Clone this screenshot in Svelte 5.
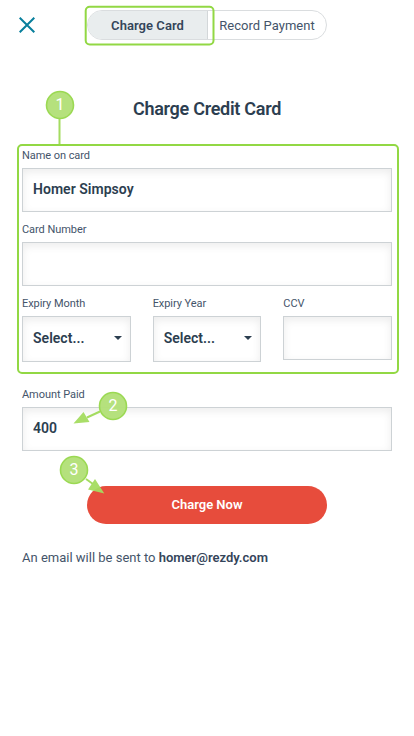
<script lang="ts">

  let name = $state("Homer Simpsoy");
  let cardNumber = $state("");
  let ccv = $state("");
  let amount = $state("400");

  const selects = ["Expiry Month", "Expiry Year"];

  const callouts = [
    { label: "1", x: 60, y: 105 },
    { label: "2", x: 113, y: 406 },
    { label: "3", x: 74, y: 470 },
  ];

</script>

<main>

  <header>
    <button class="close" aria-label="Close">
      <svg width="16" height="16" viewBox="0 0 16 16">
        <path d="M0.7 0.7L15.3 15.3M15.3 0.7L0.7 15.3" />
      </svg>
    </button>
    <div class="tabs">
      <button class="tab active">Charge Card</button>
      <button class="tab">Record Payment</button>
    </div>
  </header>

  <h1>Charge Credit Card</h1>

  <section class="card-fields">
    <label>
      <span>Name on card</span>
      <input bind:value={name} />
    </label>
    <label>
      <span>Card Number</span>
      <input bind:value={cardNumber} />
    </label>
    <div class="row">
      {#each selects as title}
        <div class="field">
          <span>{title}</span>
          <button class="select">
            Select...
            <i></i>
          </button>
        </div>
      {/each}
      <label>
        <span>CCV</span>
        <input bind:value={ccv} />
      </label>
    </div>
  </section>

  <label class="amount">
    <span>Amount Paid</span>
    <input bind:value={amount} />
  </label>

  <button class="submit">Charge Now</button>

  <p>An email will be sent to <strong>homer@rezdy.com</strong></p>

  <svg class="callouts" width="414" height="736" viewBox="0 0 414 736">
    <rect x="85.7" y="6.7" width="127.8" height="37.8" rx="4" />
    <path class="line" d="M59.5 119V144M100 411.5L87 417.5M86 479L93 484" />
    <path class="head" d="M73.5 423.5L83.5 412L89.5 422ZM104.3 493.5L88 489.5L95 479Z" />
    {#each callouts as c}
      <circle cx={c.x} cy={c.y} r="13.5" />
      <text x={c.x} y={c.y + 5.2}>{c.label}</text>
    {/each}
  </svg>

</main>

<style>

  :global(body) {
    background: #fff;
  }

  main {
    position: relative;
    box-sizing: border-box;
    width: 414px;
    height: 736px;
    padding-top: 10px;
    overflow: hidden;
    color: #2c3e50;
    font-family: Roboto, "Liberation Sans", sans-serif;
  }

  button {
    padding: 0;
    border: none;
    background: none;
    color: inherit;
    font-family: inherit;
  }

  header {
    display: flex;
    align-items: center;
    height: 30px;
    padding-left: 19px;
  }

  .close {
    width: 16px;
    height: 16px;
    margin-right: 52px;
  }

  .close svg {
    display: block;
    fill: none;
    stroke: #087f9c;
    stroke-width: 2;
  }

  .tabs {
    display: flex;
    box-sizing: border-box;
    width: 240px;
    height: 30px;
    border: 1px solid #dadddf;
    border-radius: 15px;
    overflow: hidden;
  }

  .tab {
    flex: 1;
    color: #44546a;
    font-size: 13px;
    letter-spacing: 0.05px;
  }

  .tab.active {
    flex: 0 0 120px;
    box-sizing: border-box;
    border-right: 1px solid #d3d7d9;
    background: #e9edee;
    color: #34455a;
    font-weight: 600;
  }

  h1 {
    margin: 57px 0 0;
    font-size: 18px;
    font-weight: 600;
    line-height: 24px;
    letter-spacing: -0.28px;
    text-align: center;
  }

  .card-fields {
    box-sizing: border-box;
    width: 382px;
    height: 230px;
    margin: 23px 0 0 17px;
    padding: 1px 5px 0 3px;
    border: 2px solid #92d844;
    border-radius: 5px;
  }

  label,
  .field {
    display: block;
    height: 74px;
  }

  span {
    display: block;
    height: 21px;
    color: #44546a;
    font-size: 11px;
    line-height: 18px;
    letter-spacing: -0.06px;
  }

  input,
  .select {
    display: block;
    box-sizing: border-box;
    width: 100%;
    height: 44px;
    padding: 0 10px 2px;
    border: 1px solid #cdd2d5;
    border-radius: 0;
    outline: none;
    background: #fff;
    box-shadow: inset 0 3px 8px rgba(0, 0, 0, 0.08);
    color: #2c3e50;
    font-family: inherit;
    font-size: 14px;
    font-weight: 600;
    letter-spacing: 0.03px;
  }

  .row {
    display: grid;
    grid-template-columns: repeat(3, 1fr);
    gap: 22px;
  }

  .select {
    display: flex;
    align-items: center;
    justify-content: space-between;
    height: 46px;
    padding-right: 8px;
  }

  .select i {
    border: 4px solid transparent;
    border-top-color: #2c3e50;
    border-bottom: none;
  }

  .amount {
    margin: 12px 22px 0;
  }

  .submit {
    display: block;
    width: 240px;
    height: 38px;
    margin: 26px auto 0;
    padding-bottom: 2px;
    border-radius: 19px;
    background: #e74c3c;
    color: #fff;
    font-size: 13px;
    font-weight: 600;
  }

  p {
    margin: 24px 22px 0;
    color: #44546a;
    font-size: 13px;
    line-height: 20px;
  }

  strong {
    color: #34455a;
    font-weight: 600;
  }

  .callouts {
    position: absolute;
    top: 0;
    left: 0;
    pointer-events: none;
  }

  .callouts rect {
    fill: none;
    stroke: #92d844;
    stroke-width: 2;
  }

  .line {
    fill: none;
    stroke: #a4dc60;
    stroke-width: 2;
  }

  .head {
    fill: #a4dc60;
    fill-opacity: 0.95;
  }

  .callouts circle {
    fill: #b2e078;
    fill-opacity: 0.96;
    stroke: #9bd953;
    stroke-width: 1.6;
  }

  .callouts text {
    fill: #fff;
    font-size: 16px;
    text-anchor: middle;
  }

</style>
